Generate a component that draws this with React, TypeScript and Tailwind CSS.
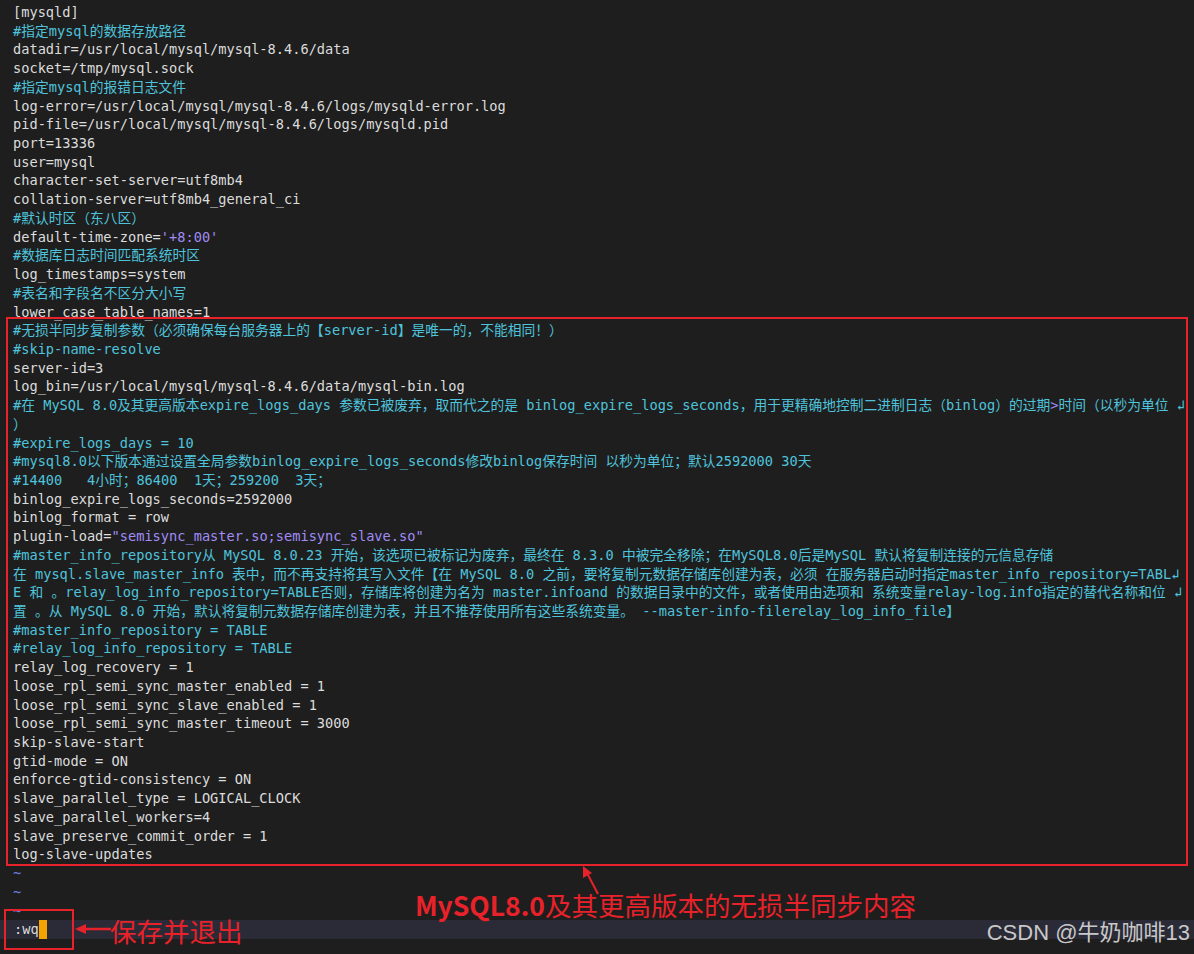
import React from 'react';

type Tone = 'n' | 'c' | 's' | 't';
type Seg = [string, Tone];

const tones: Record<Tone, string> = {
  n: 'text-[#dcdcdc]',
  c: 'text-[#4fc3dc]',
  s: 'text-[#a08cf5]',
  t: 'text-[#6a80e0]',
};

const lines: Seg[][] = [
  [['[mysqld]', 'n']],
  [['#指定mysql的数据存放路径', 'c']],
  [['datadir=/usr/local/mysql/mysql-8.4.6/data', 'n']],
  [['socket=/tmp/mysql.sock', 'n']],
  [['#指定mysql的报错日志文件', 'c']],
  [['log-error=/usr/local/mysql/mysql-8.4.6/logs/mysqld-error.log', 'n']],
  [['pid-file=/usr/local/mysql/mysql-8.4.6/logs/mysqld.pid', 'n']],
  [['port=13336', 'n']],
  [['user=mysql', 'n']],
  [['character-set-server=utf8mb4', 'n']],
  [['collation-server=utf8mb4_general_ci', 'n']],
  [['#默认时区（东八区）', 'c']],
  [['default-time-zone=', 'n'], ["'+8:00'", 's']],
  [['#数据库日志时间匹配系统时区', 'c']],
  [['log_timestamps=system', 'n']],
  [['#表名和字段名不区分大小写', 'c']],
  [['lower_case_table_names=1', 'n']],
  [['#无损半同步复制参数（必须确保每台服务器上的【server-id】是唯一的，不能相同！）', 'c']],
  [['#skip-name-resolve', 'c']],
  [['server-id=3', 'n']],
  [['log_bin=/usr/local/mysql/mysql-8.4.6/data/mysql-bin.log', 'n']],
  [
    ['#在 MySQL 8.0及其更高版本expire_logs_days 参数已被废弃，取而代之的是 binlog_expire_logs_seconds，用于更精确地控制二进制日志（binlog）的过期', 'c'],
    ['>', 's'],
    ['时间（以秒为单位 ↲', 'c'],
  ],
  [['）', 'c']],
  [['#expire_logs_days = 10', 'c']],
  [['#mysql8.0以下版本通过设置全局参数binlog_expire_logs_seconds修改binlog保存时间 以秒为单位；默认2592000 30天', 'c']],
  [['#14400   4小时；86400  1天；259200  3天；', 'c']],
  [['binlog_expire_logs_seconds=2592000', 'n']],
  [['binlog_format = row', 'n']],
  [['plugin-load=', 'n'], ['"semisync_master.so;semisync_slave.so"', 's']],
  [['#master_info_repository从 MySQL 8.0.23 开始，该选项已被标记为废弃，最终在 8.3.0 中被完全移除；在MySQL8.0后是MySQL 默认将复制连接的元信息存储', 'c']],
  [['在 mysql.slave_master_info 表中，而不再支持将其写入文件【在 MySQL 8.0 之前，要将复制元数据存储库创建为表，必须 在服务器启动时指定master_info_repository=TABL↲', 'c']],
  [['E 和 。relay_log_info_repository=TABLE否则，存储库将创建为名为 master.infoand 的数据目录中的文件，或者使用由选项和 系统变量relay-log.info指定的替代名称和位 ↲', 'c']],
  [['置 。从 MySQL 8.0 开始，默认将复制元数据存储库创建为表，并且不推荐使用所有这些系统变量。 --master-info-filerelay_log_info_file】', 'c']],
  [['#master_info_repository = TABLE', 'c']],
  [['#relay_log_info_repository = TABLE', 'c']],
  [['relay_log_recovery = 1', 'n']],
  [['loose_rpl_semi_sync_master_enabled = 1', 'n']],
  [['loose_rpl_semi_sync_slave_enabled = 1', 'n']],
  [['loose_rpl_semi_sync_master_timeout = 3000', 'n']],
  [['skip-slave-start', 'n']],
  [['gtid-mode = ON', 'n']],
  [['enforce-gtid-consistency = ON', 'n']],
  [['slave_parallel_type = LOGICAL_CLOCK', 'n']],
  [['slave_parallel_workers=4', 'n']],
  [['slave_preserve_commit_order = 1', 'n']],
  [['log-slave-updates', 'n']],
  [['~', 't']],
  [['~', 't']],
  [['~', 't']],
];

// CJK glyphs come from the fallback font, sized a touch larger than the mono cells
const cjk = /([\u2e80-\u9fff\u3000-\u303f\uff00-\uffef]+)/;

const renderSeg = (text: string, tone: Tone, key: number) => (
  <span key={key} className={tones[tone]}>
    {text.split(cjk).map((part, i) =>
      cjk.test(part) ? (
        <span key={i} className="text-[13.75px]">
          {part}
        </span>
      ) : (
        part
      )
    )}
  </span>
);

const App: React.FC = () => {
  return (
    <div className="relative h-[954px] w-full overflow-hidden bg-[#1e1e1e]">
      {/* vim buffer */}
      <div className="pt-[3px] font-['DejaVu_Sans_Mono','Noto_Sans_CJK_SC',monospace] text-[13.65px]">
        {lines.map((segs, i) => (
          <div key={i} className="h-[18.73px] whitespace-pre pl-[13px] leading-[18.73px]">
            {segs.map(([text, tone], j) => renderSeg(text, tone, j))}
          </div>
        ))}
        {/* command line */}
        <div className="flex h-[19px] items-center whitespace-pre bg-[#2a2b36] pl-[14px] leading-[19px] text-[#dcdcdc]">
          <span>:wq</span>
          <span className="inline-block h-[19px] w-[8px] bg-[#f5a300]" />
        </div>
      </div>

      {/* annotations */}
      <div className="absolute left-[6px] top-[317px] h-[549px] w-[1182px] border-2 border-[#e8222a]" />
      <div className="absolute left-[4px] top-[909px] h-[41px] w-[70px] border-2 border-[#e8222a]" />

      <svg className="pointer-events-none absolute left-0 top-0" width="1194" height="954">
        <line x1="598" y1="894" x2="587" y2="873" stroke="#e8222a" strokeWidth="2" />
        <polygon points="583,866 583,878 592,873" fill="#e8222a" />
        <line x1="111" y1="929" x2="84" y2="929" stroke="#e8222a" strokeWidth="2.5" />
        <polygon points="75,929 86,924 86,934" fill="#e8222a" />
      </svg>

      <div className="absolute left-[415px] top-[889px] whitespace-nowrap font-['Noto_Sans_CJK_SC',sans-serif] text-[26.5px] leading-[32px] text-[#e8222a]">
        <span className="font-bold">MySQL8.0</span>
        <span>及其更高版本的无损半同步内容</span>
      </div>
      <div className="absolute left-[110px] top-[915px] whitespace-nowrap font-['Noto_Sans_CJK_SC',sans-serif] text-[26.5px] leading-[32px] text-[#e8222a]">
        保存并退出
      </div>

      <div className="absolute right-[4px] top-[918px] whitespace-nowrap font-['Liberation_Sans','Noto_Sans_CJK_SC',sans-serif] text-[22px] leading-[30px] text-[#c8c8c8]">
        CSDN @牛奶咖啡13
      </div>
    </div>
  );
};

export default App;
